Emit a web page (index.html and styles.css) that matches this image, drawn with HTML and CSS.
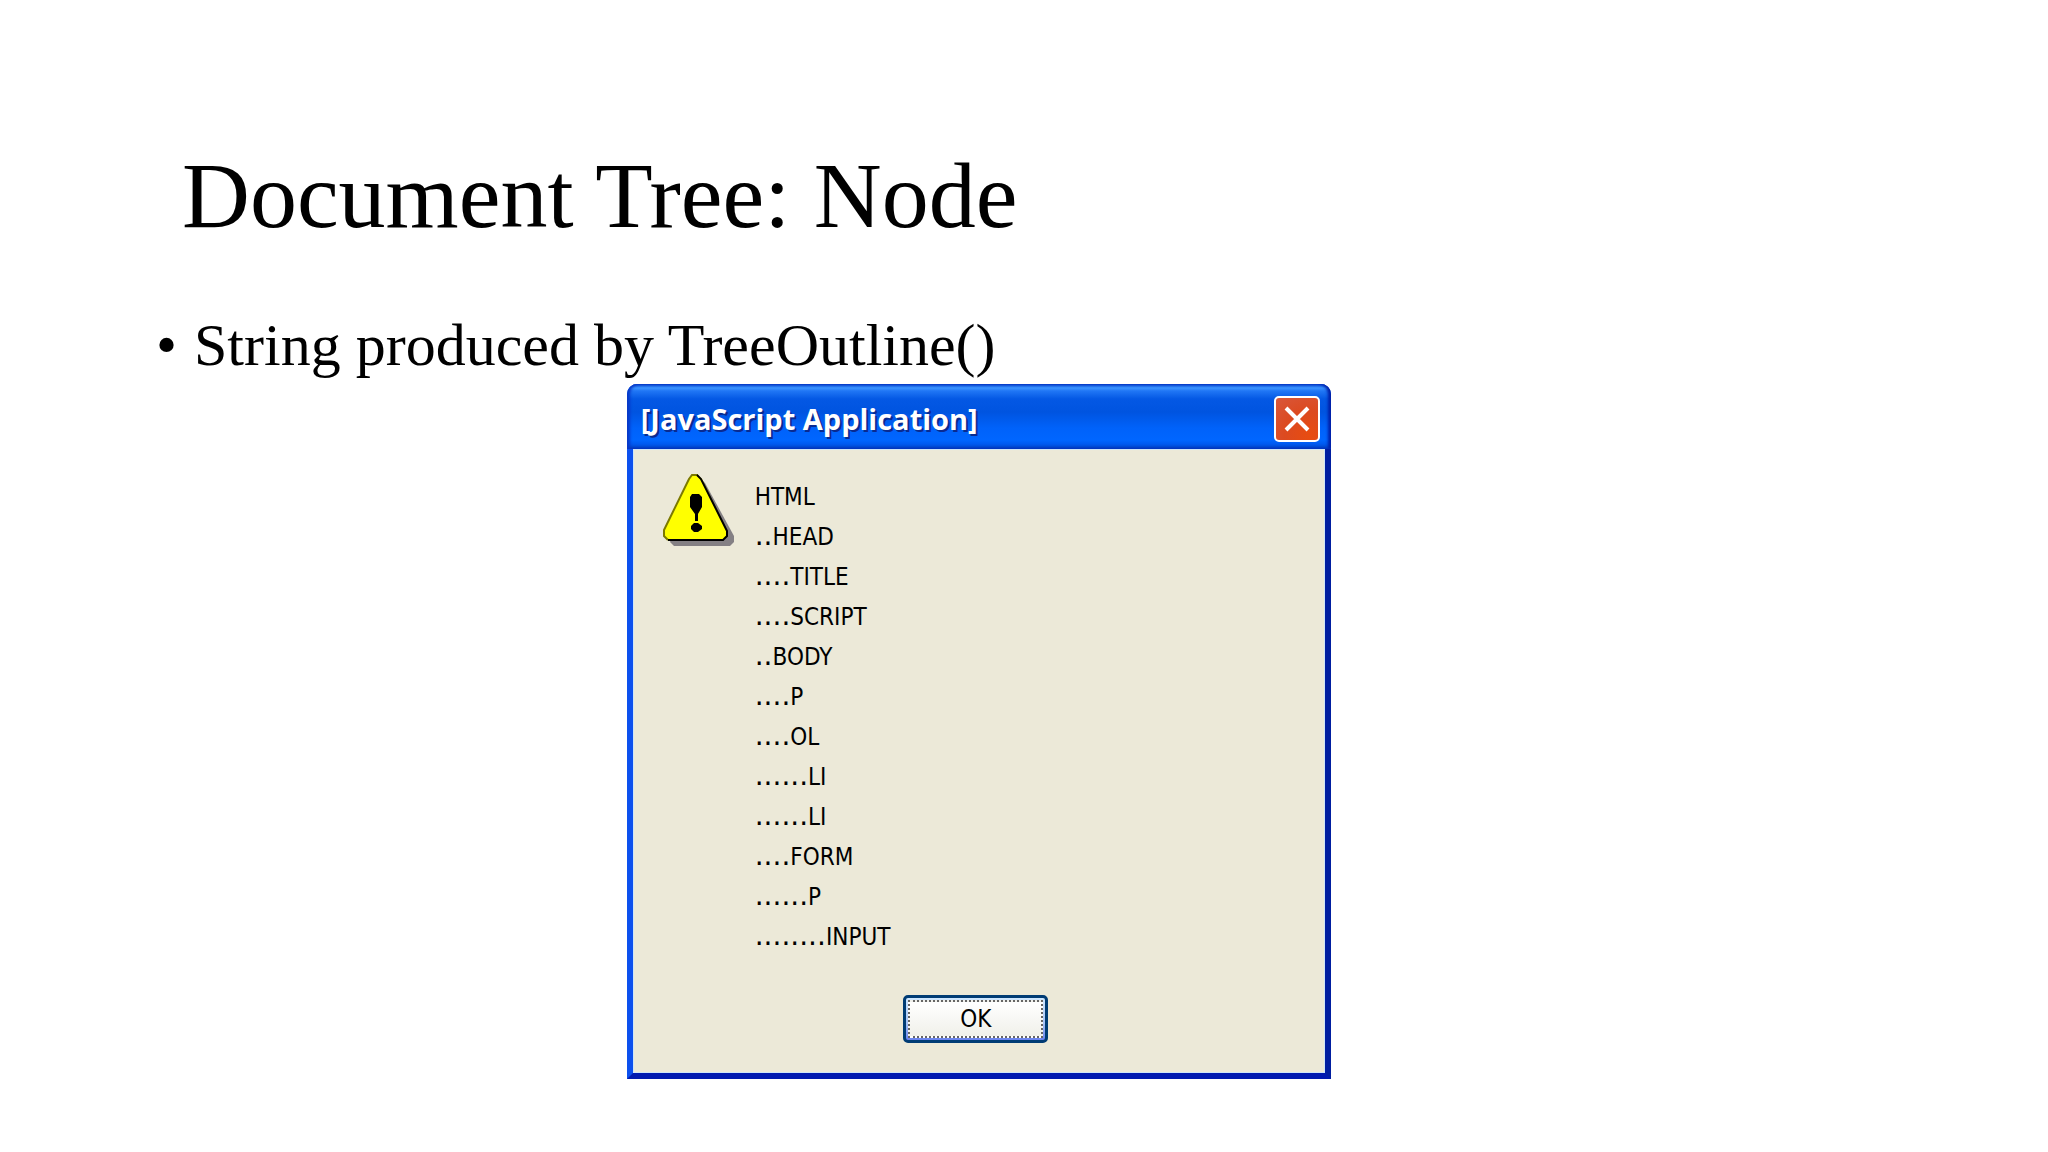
FILE: index.html
```html
<!DOCTYPE html>
<html lang="en">
<head>
  <meta charset="UTF-8">
  <meta name="viewport" content="width=device-width, initial-scale=1.0">
  <title>Document Tree: Node</title>
  <link rel="stylesheet" href="styles.css">
</head>
<body>
  <main class="slide">
    <h1>Document Tree: Node</h1>
    <ul class="points">
      <li>String produced by TreeOutline()</li>
    </ul>

    <section class="dialog" role="dialog" aria-labelledby="dialog-title">
      <header class="title-bar">
        <h2 id="dialog-title">[JavaScript Application]</h2>
        <button class="close" type="button" aria-label="Close">
          <svg viewBox="0 0 26 26" width="26" height="26">
            <path d="M2 2L24 24M24 2L2 24" stroke="#fff" stroke-width="4"/>
          </svg>
        </button>
      </header>

      <div class="dialog-body">
        <div class="message">
          <svg class="warning" viewBox="0 0 72 72" width="72" height="72">
            <path d="M32 5h6l4 4L71 62v6l-4 4H11l-4-4z" fill="#848084"/>
            <path d="M29 1h6l4 4L64 57v6l-4 3H5l-4-4v-6L26 5z" fill="#ff0"/>
            <path d="M35 1H29L26 5L1 56v6l4 4" fill="none" stroke="#7c7a00" stroke-width="2"/>
            <path d="M34 1l4 4L64 57v5l-4 4H5" fill="none" stroke="#000" stroke-width="2"/>
            <path d="M29 20h7l3 3v10l-4 7v7h-3v-7l-5-7V23z" fill="#000"/>
            <path d="M31 49h4l4 3v3l-4 3h-4l-3-3v-3z" fill="#000"/>
          </svg>
          <ul class="outline">
            <li>HTML</li>
            <li><span class="dots">..</span>HEAD</li>
            <li><span class="dots">....</span>TITLE</li>
            <li><span class="dots">....</span>SCRIPT</li>
            <li><span class="dots">..</span>BODY</li>
            <li><span class="dots">....</span>P</li>
            <li><span class="dots">....</span>OL</li>
            <li><span class="dots">......</span>LI</li>
            <li><span class="dots">......</span>LI</li>
            <li><span class="dots">....</span>FORM</li>
            <li><span class="dots">......</span>P</li>
            <li><span class="dots">........</span>INPUT</li>
          </ul>
        </div>
        <button class="ok" type="button"><span>OK</span></button>
      </div>
    </section>
  </main>
</body>
</html>
```

FILE: styles.css
```css
* {
  box-sizing: border-box;
}
body {
  margin: 0;
  background-color: #fff;
  color: #000;
  font-family: "Liberation Serif", "Times New Roman", serif;
}
.slide {
  padding: 143px 0 72px;
}
h1 {
  margin: 0 0 62px;
  padding-left: 182px;
  font-size: 94px;
  font-weight: normal;
  line-height: 104px;
}
.points {
  list-style: none;
  margin: 0 0 3px;
  padding-left: 156px;
  font-size: 60px;
  line-height: 72px;
}
.points li {
  display: flex;
}
.points li::before {
  content: "•";
  width: 38px;
}

/* message box */
.dialog {
  width: 34.4%;
  min-width: 500px;
  margin-left: 30.6%;
  border: 6px solid;
  border-top: 0;
  border-color: #0831d9 #001ea0 #0019b0 #0c50ee;
  border-radius: 10px 10px 0 0;
  background: #0054e3;
  font-family: "DejaVu Sans Condensed", "DejaVu Sans", Tahoma, sans-serif;
}
.title-bar {
  display: flex;
  align-items: center;
  justify-content: space-between;
  height: 65px;
  margin: 0 -6px;
  padding: 4px 11px 0 14px;
  border-radius: 10px 10px 0 0;
  background: linear-gradient(#0a50d8 0, #3a93ff 4px, #2076f5 7px, #0458e4 15px, #0054e0 28px, #0062fa 44px, #0066ff 56px, #005af0 60px, #0040c0 65px);
  box-shadow: inset 3px 0 3px #0838c8, inset -3px 0 3px #0020a8;
}
.title-bar h2 {
  margin: 0;
  color: #fff;
  font-family: "Open Sans", "Trebuchet MS", sans-serif;
  font-size: 29px;
  font-weight: bold;
  line-height: 40px;
  text-shadow: 2px 2px 0 #0a2a90;
}
.close {
  display: flex;
  align-items: center;
  justify-content: center;
  width: 46px;
  height: 46px;
  padding: 0;
  border: 2px solid #fff;
  border-radius: 5px;
  background: radial-gradient(circle at 80% 90%, #e84c10 0, #dc4a20 50%, #d8583c 100%);
}
.dialog-body {
  padding: 24px 35px 29px 29px;
  border: 1px solid #cfe6f8;
  background-color: #ece9d8;
}
.message {
  display: flex;
  gap: 20px;
}
.outline {
  list-style: none;
  margin: 0 0 38px;
  padding: 3px 0 0;
  font-size: 24px;
  line-height: 40px;
}
.outline li {
  height: 40px;
}
.dots {
  font-family: "DejaVu Sans", sans-serif;
  font-size: 28px;
  line-height: 1;
}
.ok {
  display: block;
  width: 145px;
  height: 48px;
  margin: 0 auto;
  padding: 2px;
  border: 3px solid #003c74;
  border-radius: 5px;
  background: linear-gradient(#cee7ff, #a5c3f5 60%, #6982ee);
  color: #000;
  font-family: inherit;
  font-size: 24px;
}
.ok span {
  display: flex;
  align-items: center;
  justify-content: center;
  height: 100%;
  border: 2px dotted #666;
  background: linear-gradient(#fff, #f0f0ea);
}
```
